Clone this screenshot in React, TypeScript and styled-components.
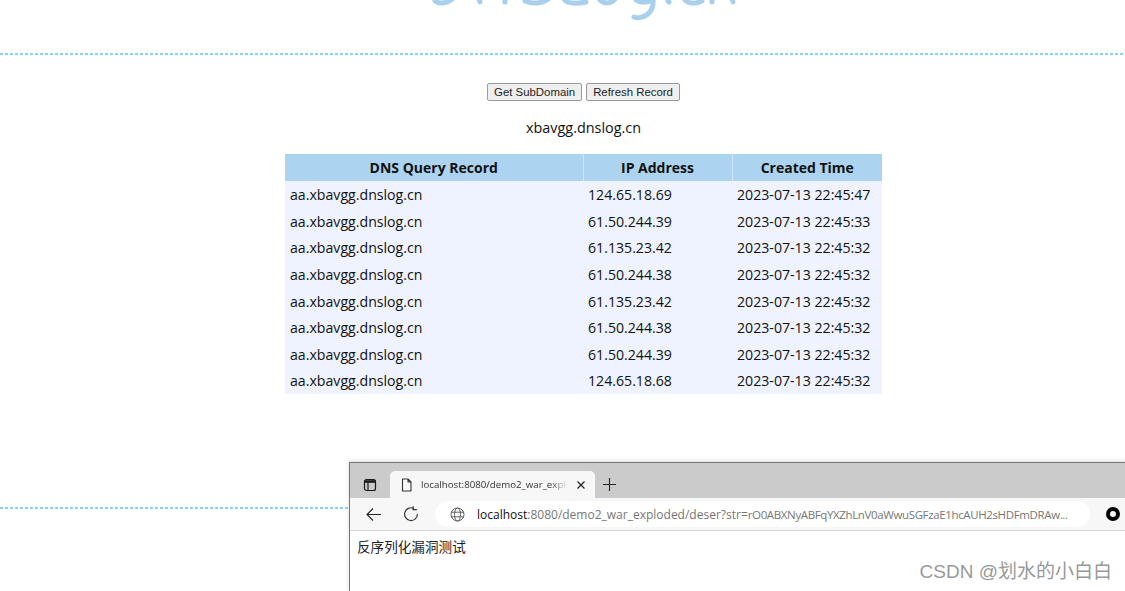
import React from "react";
import styled, { createGlobalStyle } from "styled-components";

const Global = createGlobalStyle`
  html, body { margin: 0; padding: 0; background: #fff; width: 1125px; height: 591px; overflow: hidden; }
  #root { height: 591px; }
`;

const Page = styled.div`
  position: relative;
  width: 1125px;
  height: 591px;
  overflow: hidden;
  font-family: "Open Sans", "Noto Sans", sans-serif;
  color: #111;
`;

const Flow = styled.main`
  width: 1167px;
  display: flex;
  flex-direction: column;
`;

const LogoBar = styled.header`
  height: 53px;
  display: flex;
  justify-content: center;
  flex: none;
`;

const Logo = styled.svg`
  width: 330px;
  height: 30px;
  margin-left: 3px;
`;

const Rule = styled.div`
  height: 2px;
  flex: none;
  background: repeating-linear-gradient(90deg, #86d2fb 0 3px, transparent 3px 5px);
`;

const Buttons = styled.div`
  display: flex;
  justify-content: center;
  gap: 4px;
  margin-top: 28px;
`;

const Btn = styled.button`
  height: 18px;
  padding: 0 6px 1px;
  font: 11.4px "Liberation Sans", Arial, sans-serif;
  background: #efefef;
  border: 1px solid #9a9a9a;
  border-radius: 2px;
  color: #222;
`;

const Domain = styled.div`
  margin-top: 17px;
  text-align: center;
  font-size: 14.4px;
  line-height: 20px;
`;

const Table = styled.table`
  margin: 16px auto 0;
  width: 597px;
  border-collapse: collapse;
  font-size: 14.15px;
  table-layout: fixed;
`;

const Th = styled.th<{ $w: number }>`
  box-sizing: border-box;
  width: ${(p) => p.$w}px;
  height: 27.4px;
  padding: 0;
  background: #acd4f0;
  font-weight: 700;
  font-size: 14px;
  text-align: center;
  border-left: 1px solid #cfe5f6;
  &:first-child { border-left: 0; }
`;

const Td = styled.td`
  box-sizing: border-box;
  height: 26.6px;
  padding: 0 0 0 5px;
  background: #eef3ff;
`;

const LowerRule = styled(Rule)`
  position: absolute;
  left: 0;
  top: 507px;
  width: 350px;
`;

const Browser = styled.section`
  position: absolute;
  left: 349px;
  top: 462px;
  width: 776px;
  height: 129px;
  background: #fff;
  border-left: 1px solid #777;
  border-top: 1px solid #777;
  box-shadow: 0 -1px 4px rgba(0, 0, 0, 0.15);
  display: flex;
  flex-direction: column;
`;

const TabStrip = styled.div`
  height: 35px;
  flex: none;
  background: #cbcbcb;
  display: flex;
  align-items: flex-end;
`;

const TabToggle = styled.span`
  width: 40px;
  height: 27px;
  display: flex;
  align-items: center;
  justify-content: center;
`;

const Tab = styled.div`
  width: 205px;
  height: 27px;
  background: #f7f7f7;
  border-radius: 5px 5px 0 0;
  display: flex;
  align-items: center;
  padding: 0 9px 0 10px;
  box-sizing: border-box;
  gap: 8px;
`;

const TabTitle = styled.span`
  flex: 1;
  min-width: 0;
  white-space: nowrap;
  font-size: 9.7px;
  color: #333;
  -webkit-mask-image: linear-gradient(to right, #000 88%, transparent);
  mask-image: linear-gradient(to right, #000 88%, transparent);
`;

const NewTab = styled.span`
  width: 28px;
  height: 27px;
  display: flex;
  align-items: center;
  justify-content: center;
`;

const Toolbar = styled.div`
  height: 33px;
  flex: none;
  box-sizing: border-box;
  background: #f7f7f7;
  border-bottom: 1px solid #d4d4d4;
  display: flex;
  align-items: center;
`;

const NavBtn = styled.span<{ $w: number }>`
  width: ${(p) => p.$w}px;
  display: flex;
  align-items: center;
  justify-content: center;
  flex: none;
`;

const Address = styled.div`
  width: 655px;
  height: 26px;
  flex: none;
  margin-left: 10px;
  background: #fff;
  border-radius: 13px;
  display: flex;
  align-items: center;
  padding-left: 15px;
  box-sizing: border-box;
  gap: 12px;
  font-size: 12px;
  color: #777;
  white-space: nowrap;
  svg { flex: none; }
`;

const Host = styled.span`
  color: #111;
`;

const Query = styled.span`
  font-size: 11.5px;
  letter-spacing: -0.37px;
`;

const Profile = styled.span`
  width: 14px;
  height: 14px;
  box-sizing: border-box;
  border: 4px solid #000;
  border-radius: 50%;
  margin-left: 16px;
  flex: none;
`;

const Content = styled.div`
  padding: 5px 7px;
  font: 13.6px/20px "Noto Sans CJK SC", sans-serif;
  color: #222;
`;

const Watermark = styled.div`
  position: absolute;
  right: 13px;
  top: 559px;
  font: 19px/26px "Liberation Sans", "Noto Sans CJK SC", sans-serif;
  color: #999;
`;

const rows = [
  ["124.65.18.69", "2023-07-13 22:45:47"],
  ["61.50.244.39", "2023-07-13 22:45:33"],
  ["61.135.23.42", "2023-07-13 22:45:32"],
  ["61.50.244.38", "2023-07-13 22:45:32"],
  ["61.135.23.42", "2023-07-13 22:45:32"],
  ["61.50.244.38", "2023-07-13 22:45:32"],
  ["61.50.244.39", "2023-07-13 22:45:32"],
  ["124.65.18.68", "2023-07-13 22:45:32"],
];

export default function App() {
  return (
    <Page>
      <Global />
      <Flow>
        <LogoBar>
          <Logo viewBox="0 0 330 30" fill="none" stroke="#a8d0ee" strokeWidth="5" strokeLinecap="round" strokeLinejoin="round">
            <path d="M15 1 C19 4 26 4 32 -1" />
            <path d="M59 -1 L60 2 M85 -1 L85 2" />
            <path d="M105 1 C112 4 122 4 128 -1" />
            <path d="M144 -1 C147 4 156 4 166 2" />
            <path d="M180 0 C184 4 191 4 195 -1" />
            <path d="M233 -1 C234 9 229 15 222 17 C219 18 216 18 214 17 M216 0 C220 3 228 3 233 -1" />
            <path d="M248 1 L249 2" />
            <path d="M265 0 C269 4 276 4 282 1" />
            <path d="M292 -1 L292 2 M312 -1 L313 2" />
          </Logo>
        </LogoBar>
        <Rule />
        <Buttons>
          <Btn>Get SubDomain</Btn>
          <Btn>Refresh Record</Btn>
        </Buttons>
        <Domain>xbavgg.dnslog.cn</Domain>
        <Table>
          <thead>
            <tr>
              <Th $w={298}>DNS Query Record</Th>
              <Th $w={149}>IP Address</Th>
              <Th $w={150}>Created Time</Th>
            </tr>
          </thead>
          <tbody>
            {rows.map((r, i) => (
              <tr key={i}>
                <Td>aa.xbavgg.dnslog.cn</Td>
                <Td>{r[0]}</Td>
                <Td>{r[1]}</Td>
              </tr>
            ))}
          </tbody>
        </Table>
      </Flow>
      <LowerRule />
      <Browser>
        <TabStrip>
          <TabToggle>
            <svg width="14" height="14" viewBox="0 0 14 14" fill="none" stroke="#1a1a1a" strokeWidth="1.2">
              <rect x="1.5" y="1.5" width="11" height="11" rx="2" />
              <path d="M1.5 3.5 H12.5" strokeWidth="2.6" />
              <path d="M5 4 V12.5" />
            </svg>
          </TabToggle>
          <Tab>
            <svg width="13" height="14" viewBox="0 0 13 14" fill="none" stroke="#333" strokeWidth="1.1" strokeLinejoin="round">
              <path d="M2.5 1 H8 L11 4 V13 H2.5 Z M8 1 V4 H11" />
            </svg>
            <TabTitle>localhost:8080/demo2_war_explo</TabTitle>
            <svg width="10" height="10" viewBox="0 0 10 10" fill="none" stroke="#222" strokeWidth="1.2">
              <path d="M1.5 1.5 L8.5 8.5 M8.5 1.5 L1.5 8.5" />
            </svg>
          </Tab>
          <NewTab>
            <svg width="13" height="13" viewBox="0 0 13 13" fill="none" stroke="#222" strokeWidth="1.1">
              <path d="M6.5 0 V13 M0 6.5 H13" />
            </svg>
          </NewTab>
        </TabStrip>
        <Toolbar>
          <NavBtn $w={47}>
            <svg width="15" height="13" viewBox="0 0 15 13" fill="none" stroke="#222" strokeWidth="1.1">
              <path d="M15 6.5 H1 M7 .5 L1 6.5 L7 12.5" />
            </svg>
          </NavBtn>
          <NavBtn $w={28}>
            <svg width="16" height="16" viewBox="0 0 15 15" fill="none" stroke="#333" strokeWidth="1.1">
              <path d="M10 2.2 A6 6 0 1 0 13.5 7.5" />
              <path d="M9.5 .2 V3.4 H13" />
            </svg>
          </NavBtn>
          <Address>
            <svg width="15" height="15" viewBox="0 0 15 15" fill="none" stroke="#555" strokeWidth="0.9">
              <circle cx="7.5" cy="7.5" r="6.5" />
              <ellipse cx="7.5" cy="7.5" rx="3" ry="6.5" />
              <path d="M1 5.2 H14 M1 9.8 H14" />
            </svg>
            <span>
              <Host>localhost</Host>:8080/demo2_war_exploded/deser?str=
              <Query>rO0ABXNyABFqYXZhLnV0aWwuSGFzaE1hcAUH2sHDFmDRAw...</Query>
            </span>
          </Address>
          <Profile />
        </Toolbar>
        <Content>反序列化漏洞测试</Content>
      </Browser>
      <Watermark>CSDN @划水的小白白</Watermark>
    </Page>
  );
}
